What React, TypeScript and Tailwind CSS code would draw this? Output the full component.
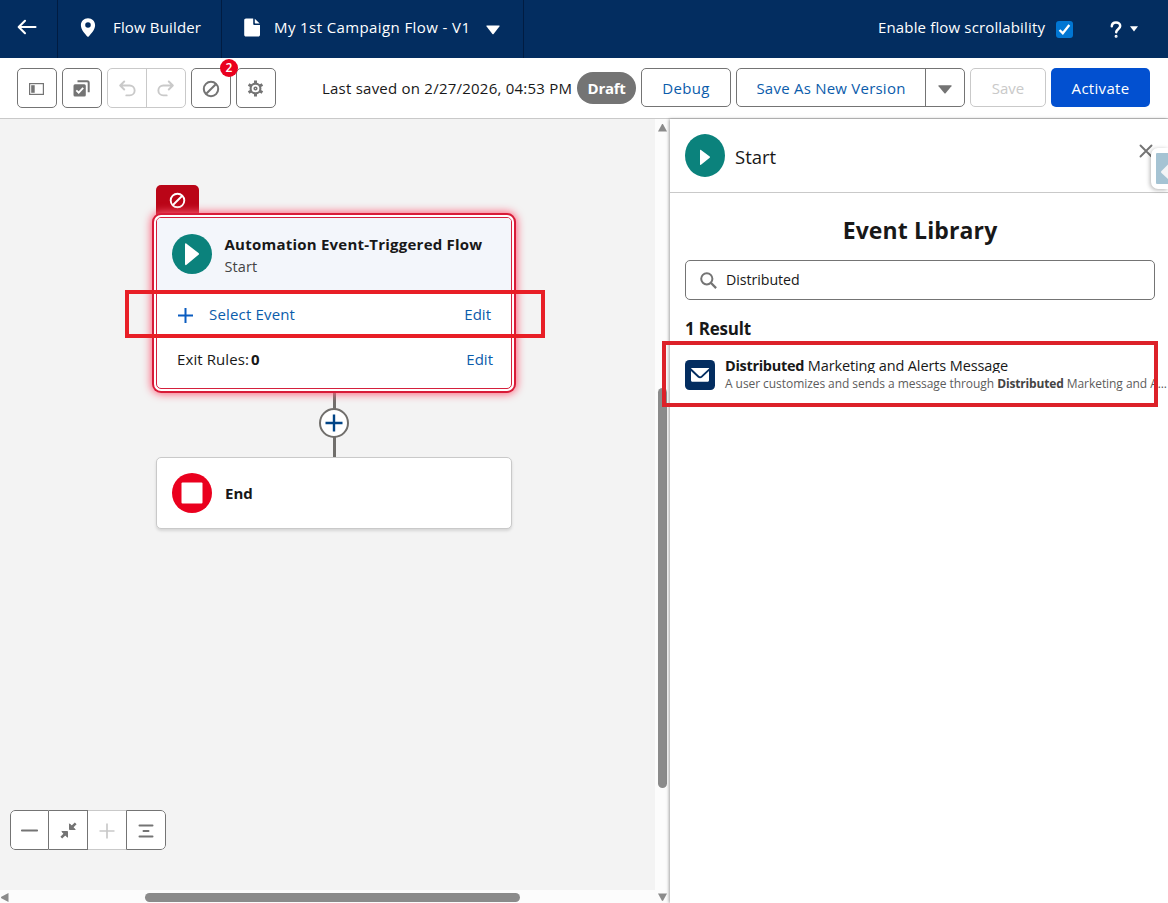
import React from "react";

const ink = "text-[#181818]";

function Ban({ className = "" }: { className?: string }) {
  return (
    <svg viewBox="0 0 18 18" className={className} fill="none" stroke="currentColor" strokeWidth="2">
      <circle cx="9" cy="9" r="7.2" />
      <path d="M4.2 13.8 13.8 4.2" />
    </svg>
  );
}

function TopBar() {
  return (
    <header className="flex h-[58px] shrink-0 items-stretch bg-[#032d60] text-[15px] text-white">
      <div className="flex w-[58px] items-center border-r border-[#011c42] pl-[17px] pb-[4px]">
        <svg className="h-[16px] w-[20px]" viewBox="0 0 20 16" fill="none" stroke="white" strokeWidth="2.1" strokeLinecap="round" strokeLinejoin="round">
          <path d="M18.500 8H2M8 1.800 1.700 8 8 14.200" />
        </svg>
      </div>
      <div className="flex w-[164px] items-center border-r border-[#011c42] pl-[22px] pb-[3px]">
        <svg className="h-[19px] w-[16px]" viewBox="0 0 16 19" fill="white">
          <path fillRule="evenodd" d="M8 .3C3.900.3.900 3.400.900 7.300c0 4.900 4.800 9.300 6.400 11.200.4.400 1 .4 1.400 0C10.300 16.600 15.100 12.200 15.100 7.300 15.100 3.400 12.100.3 8 .3Zm0 9.500a2.800 2.800 0 1 1 0-5.600 2.800 2.800 0 0 1 0 5.600Z" />
        </svg>
        <span className="ml-[17px] whitespace-nowrap tracking-[0.15px]">Flow Builder</span>
      </div>
      <div className="flex w-[302px] items-center border-r border-[#011c42] pl-[22px] pb-[3px]">
        <svg className="h-[19px] w-[16px]" viewBox="0 0 16 19" fill="white">
          <path d="M2 .5h7.200v5.300c0 .8.500 1.300 1.300 1.300H16v9.600c0 1.100-.7 1.800-1.800 1.800H2C.9 18.500.2 17.800.2 16.700V2.300C.2 1.200.9.5 2 .5ZM10.800.8 15.700 5.500h-4.200c-.5 0-.7-.2-.7-.7Z" />
        </svg>
        <span className="ml-[14px] w-[212px] whitespace-nowrap tracking-[0.4px]">My 1st Campaign Flow - V1</span>
        <svg className="mt-[5px] h-[10px] w-[14px]" viewBox="0 0 14 10" fill="white">
          <path d="M1 .5h12c.6 0 .7.500.4.900L7.600 9c-.4.400-.8.400-1.200 0L.6 1.400C.3 1 .4.500 1 .5Z" />
        </svg>
      </div>
      <div className="flex flex-1 items-center justify-end pb-[3px]">
        <span className="w-[178px] whitespace-nowrap font-medium tracking-[0.15px]">Enable flow scrollability</span>
        <span className="mt-[4px] flex h-[17px] w-[17px] items-center justify-center rounded-[3px] bg-[#0176d3]">
          <svg className="h-[13px] w-[13px]" viewBox="0 0 13 13" fill="none" stroke="white" strokeWidth="2.300">
            <path d="M1.500 7 4.800 10.200 11.300 2" />
          </svg>
        </span>
        <svg className="ml-[37px] mt-[3px] h-[17px] w-[12px]" viewBox="0 0 12 17" fill="none" stroke="white" strokeWidth="2.500" strokeLinecap="round">
          <path d="M1.800 5.300C1.900 2.900 3.600 1.500 6 1.500s4.200 1.400 4.200 3.600C10.200 8 6.400 7.900 6.200 11.200" />
          <circle cx="6.100" cy="15.300" r=".6" strokeWidth="1.800" />
        </svg>
        <svg className="ml-[8px] mr-[30px] mt-[2px] h-[6px] w-[8px]" viewBox="0 0 8 6" fill="white">
          <path d="M0 .3h8L4 5.500Z" />
        </svg>
      </div>
    </header>
  );
}

const box = "flex h-10 w-10 items-center justify-center rounded-[5px] border border-[#747474] bg-white text-[#747474]";

function Toolbar() {
  return (
    <div className="flex h-[61px] shrink-0 items-start gap-[5px] border-b border-[#c9c9c9] bg-white pl-[17px] pt-[10px] text-[15px]">
      <div className={box}>
        <svg className="mr-[2px] mt-[2px] h-[12px] w-[15px]" viewBox="0 0 15 12">
          <rect x=".6" y=".6" width="13.800" height="10.800" fill="none" stroke="#747474" strokeWidth="1.200" />
          <rect x="2.200" y="2.200" width="3.500" height="7.600" fill="#747474" />
        </svg>
      </div>
      <div className={box}>
        <svg className="mr-[2px] h-[17px] w-[17px]" viewBox="0 0 17 17" fill="none">
          <path d="M4.500 1.300h9.700c1 0 1.500.5 1.500 1.500v9.500" stroke="#747474" strokeWidth="2" />
          <rect x=".5" y="4.300" width="12.300" height="12.300" rx="1.500" fill="#747474" />
          <path d="M3.300 10.300 5.700 12.700 10.200 7.900" stroke="white" strokeWidth="1.800" />
        </svg>
      </div>
      <div className="flex h-10 w-[79px] rounded-[5px] border border-[#c9c9c9] text-[#c9c9c9]">
        <div className="flex w-[39px] items-center justify-center border-r border-[#c9c9c9] pt-[1px]">
          <svg className="h-[17px] w-[17px]" viewBox="0 0 17 17" fill="none" stroke="currentColor" strokeWidth="1.900" strokeLinecap="round" strokeLinejoin="round">
            <path d="M5.200 1.500 1.200 5.500l4 4M1.500 5.500h9.200a4.900 4.900 0 0 1 0 9.900H7.300" />
          </svg>
        </div>
        <div className="flex flex-1 items-center justify-center pr-[1px] pt-[1px]">
          <svg className="h-[17px] w-[17px] -scale-x-100" viewBox="0 0 17 17" fill="none" stroke="currentColor" strokeWidth="1.900" strokeLinecap="round" strokeLinejoin="round">
            <path d="M5.200 1.500 1.200 5.500l4 4M1.500 5.500h9.200a4.900 4.900 0 0 1 0 9.900H7.300" />
          </svg>
        </div>
      </div>
      <div className={box + " relative"}>
        <Ban className="h-[18px] w-[18px] mt-[2px]" />
        <span className="absolute -right-[8px] -top-[10px] flex h-[18px] w-[18px] items-center justify-center rounded-full bg-[#ea001e] text-[12px] font-semibold leading-none text-white">2</span>
      </div>
      <div className={box}>
        <svg className="mr-[1px] mt-[1px] h-[17px] w-[17px]" viewBox="0 0 17 17" fill="none" stroke="currentColor">
          <circle cx="8.500" cy="8.500" r="4.900" strokeWidth="2.100" />
          <circle cx="8.500" cy="8.500" r="1.300" strokeWidth="1.600" />
          <path d="M8.500 .5v3M8.500 13.500v3M1.600 4.500l2.600 1.500M12.800 11l2.600 1.500M1.600 12.500 4.200 11M12.800 6l2.600-1.500" strokeWidth="3" />
        </svg>
      </div>
      <span className={"ml-[41px] w-[250px] whitespace-nowrap leading-[40px] tracking-[0.23px] " + ink}>Last saved on 2/27/2026, 04:53 PM</span>
      <span className="mt-[4px] flex h-8 w-[59px] items-center justify-center rounded-full bg-[#747474] font-bold tracking-[-0.3px] text-white">Draft</span>
      <button className="h-[39px] w-[90px] rounded-[5px] border border-[#747474] pt-[1px] text-[#0b5cab] tracking-[0.3px]">Debug</button>
      <div className="flex h-[39px] w-[229px] rounded-[5px] border border-[#747474] text-[#0b5cab]">
        <button className="w-[189px] whitespace-nowrap border-r border-[#747474] pt-[1px] tracking-[0.23px]">Save As New Version</button>
        <span className="flex flex-1 items-center justify-center pt-[4px]">
          <svg className="h-[9px] w-[14px]" viewBox="0 0 14 9" fill="#747474">
            <path d="M1 .3h12c.6 0 .7.500.4.9L7.600 8.300c-.4.400-.8.400-1.200 0L.6 1.200C.3.800.4.300 1 .3Z" />
          </svg>
        </span>
      </div>
      <button className="h-[39px] w-[76px] rounded-[5px] border border-[#c9c9c9] pt-[1px] text-[#c9c9c9]">Save</button>
      <button className="h-[39px] w-[99px] rounded-[5px] bg-[#0250d0] pt-[1px] text-white tracking-[0.3px]">Activate</button>
    </div>
  );
}

function Canvas() {
  return (
    <div className="relative h-[771px] bg-[#f3f3f3] text-[15px]">
      <div className="absolute left-[156px] top-[66px] flex h-[32px] w-[43px] justify-center rounded-t-[5px] bg-[#ba0517] pt-[7px] text-white">
        <Ban className="h-[17px] w-[17px]" />
      </div>
      <div className="absolute left-[333px] top-[274px] h-[66px] w-[3px] bg-[#706e6b]" />
      <div className="absolute left-[156px] top-[98px] h-[172px] w-[356px] overflow-visible rounded-[5px] border border-[#d4203c] bg-white shadow-[0_0_0_2px_#fff,0_0_0_4px_#d81b38,0_0_8px_5px_#ff5f78]">
        <div className="flex h-[74px] rounded-t-[4px] bg-[#f3f6fb] pl-[15px] pt-[16px]">
          <svg className="h-10 w-10" viewBox="0 0 40 40">
            <circle cx="20" cy="20" r="20" fill="#0b827c" />
            <path d="M13 10.500c0-1.200.7-1.500 1.500-.8l12 9.300c.7.600.7 1.200 0 1.800l-12 10c-.8.700-1.500.4-1.500-.7Z" fill="white" />
          </svg>
          <div className="-mt-[1px] ml-[12.500px] whitespace-nowrap">
            <div className={"font-bold leading-[23px] tracking-[0.23px] " + ink}>Automation Event-Triggered Flow</div>
            <div className="text-[14.500px] leading-[21px] tracking-[0.1px] text-[#444]">Start</div>
          </div>
        </div>
        <div className="flex h-[44px] items-center pl-[20px] pr-[20px] text-[#0b5cab]">
          <svg className="mt-[2px] h-[17px] w-[17px]" viewBox="0 0 17 17" stroke="#0b5cc0" strokeWidth="2">
            <path d="M8.500 1v15M1 8.500h15" />
          </svg>
          <span className="ml-[15px] tracking-[0.17px]">Select Event</span>
          <span className="ml-auto">Edit</span>
        </div>
        <div className={"flex h-[46px] items-center pl-[20px] pr-[18px] " + ink}>
          <span className="tracking-[0.1px]">Exit Rules:</span>
          <b className="ml-[2px]">0</b>
          <span className="ml-auto text-[#0b5cab]">Edit</span>
        </div>
      </div>
      <div className="absolute left-[319px] top-[289px] flex h-[30px] w-[30px] items-center justify-center rounded-full border-[2px] border-[#706e6b] bg-white">
        <svg className="h-[18px] w-[18px]" viewBox="0 0 18 18" stroke="#014486" strokeWidth="2.400">
          <path d="M9 .5v17M.5 9h17" />
        </svg>
      </div>
      <div className="absolute left-[156px] top-[338px] flex h-[72px] w-[356px] items-center rounded-[5px] border border-[#c9c9c9] bg-white pl-[15px] shadow-[0_2px_3px_rgba(0,0,0,0.12)]">
        <svg className="h-10 w-10" viewBox="0 0 40 40">
          <circle cx="20" cy="20" r="20" fill="#ea001e" />
          <rect x="9.500" y="9.500" width="21" height="21" rx="1" fill="white" />
        </svg>
        <span className={"ml-[13px] font-bold " + ink}>End</span>
      </div>
      <div className="absolute left-[125px] top-[171px] h-[48px] w-[420px] border-4 border-[#e81e26]" />
      <div className="absolute left-[10px] top-[691px] flex h-[40px] w-[156px] overflow-hidden rounded-[5px] bg-white text-[#747474]">
        <div className="flex w-[39px] items-center justify-center rounded-l-[5px] border border-[#747474]">
          <svg className="mt-[1px] h-[3px] w-[17px]" viewBox="0 0 17 3"><rect y=".5" width="17" height="2" rx=".8" fill="currentColor" /></svg>
        </div>
        <div className="flex w-[39px] items-center justify-center border border-l-0 border-[#747474]">
          <svg className="mt-[1px] h-[17px] w-[17px]" viewBox="0 0 17 17" fill="currentColor" stroke="currentColor">
            <path d="M9.500 1.800v5.700h5.700ZM7.500 15.200V9.500H1.800Z" strokeWidth="1" strokeLinejoin="round" />
            <path d="M15.700 1.300 11 6M1.300 15.700 6 11" strokeWidth="2.500" />
          </svg>
        </div>
        <div className="flex w-[38px] items-center justify-center border-y border-[#c9c9c9] text-[#c9c9c9]">
          <svg className="mt-[2px] h-[16px] w-[16px]" viewBox="0 0 16 16" stroke="currentColor" strokeWidth="1.700"><path d="M8 .5v15M.5 8h15" /></svg>
        </div>
        <div className="flex w-[40px] items-center justify-center rounded-r-[5px] border border-[#747474]">
          <svg className="mt-[2px] h-[14px] w-[16px]" viewBox="0 0 16 14" stroke="currentColor" strokeWidth="2" strokeLinecap="round"><path d="M1.500 1.500h13M5.500 7h5M1.500 12.500h13" /></svg>
        </div>
      </div>
    </div>
  );
}

function SidePanel() {
  return (
    <aside className="relative flex w-[498px] shrink-0 flex-col bg-white shadow-[-1px_0_3px_rgba(0,0,0,0.35)]">
      <div className="flex h-[74px] shrink-0 border-b border-[#c9c9c9] pl-[15px] pt-[15px]">
        <svg className="h-[43px] w-[40px]" viewBox="0 0 40 43">
          <ellipse cx="20" cy="21.500" rx="20" ry="21.500" fill="#0b827c" />
          <path d="M15 16.500c0-.8.500-1 1-.5l8.700 6.600c.5.400.5.800 0 1.200L16 30.700c-.5.500-1 .3-1-.5Z" fill="white" />
        </svg>
        <span className={"ml-[10px] mt-[9px] text-[18.500px] leading-[28px] " + ink}>Start</span>
        <svg className="ml-auto mr-[15px] mt-[10px] h-[14px] w-[14px]" viewBox="0 0 14 14" stroke="#747474" strokeWidth="1.900" strokeLinecap="round">
          <path d="m1.500 1.500 11 11M12.500 1.500l-11 11" />
        </svg>
      </div>
      <div className="absolute right-0 top-[29px] h-[41px] w-[17px] rounded-l-[7px] bg-white pl-[5px] pt-[5px] shadow-[-1px_1px_4px_rgba(0,0,0,0.3)]">
        <svg className="h-[31px] w-[12px]" viewBox="0 0 12 31">
          <rect width="14" height="31" rx="1" fill="#a5c3d3" />
          <path d="M12 11.500 5.500 18c-.7.700-.7 1.300 0 2L12 26Z" fill="#f3f4f6" />
        </svg>
      </div>
      <h2 className={"mt-[20px] pl-[2px] text-center text-[23px] font-bold leading-[34px] tracking-[0.13px] " + ink}>Event Library</h2>
      <div className="ml-[15px] mt-[13px] flex h-10 w-[470px] shrink-0 items-center rounded-[5px] border border-[#747474] pl-[14px]">
        <svg className="h-[17px] w-[17px]" viewBox="0 0 17 17" fill="none" stroke="#747474" strokeWidth="2">
          <circle cx="6.800" cy="6.800" r="5.600" />
          <path d="m10.800 10.800 5.300 5.300" strokeWidth="2.300" />
        </svg>
        <span className={"ml-[9px] text-[14.200px] tracking-[-0.05px] " + ink}>Distributed</span>
      </div>
      <div className={"ml-[15px] mt-[16px] text-[17px] font-bold leading-[25px] tracking-[-0.2px] " + ink}>1 Result</div>
      <div className="ml-[15px] mt-[15px] flex">
        <svg className="mt-[4px] h-[30px] w-[30px] shrink-0" viewBox="0 0 30 30">
          <rect width="30" height="30" rx="4.500" fill="#032d60" />
          <path d="M6.500 8h17.300c.4 0 .5.300.2.600l-7.900 7.400c-.6.500-1.300.500-1.900 0L6.300 8.600C6 8.300 6.100 8 6.500 8Z" fill="white" />
          <path d="M6 11v9.200c0 .9.600 1.500 1.500 1.500h15c.9 0 1.500-.6 1.500-1.500V11l-6.900 6.400c-1.200 1.100-3 1.100-4.200 0Z" fill="white" />
        </svg>
        <div className="ml-[10px] whitespace-nowrap">
          <div className={"h-[17px] overflow-hidden text-[14.500px] leading-[20px] tracking-[-0.12px] " + ink}><b className="tracking-[-0.3px]">Distributed</b> Marketing and Alerts Message</div>
          <div className="mt-[1px] text-[12px] leading-[20px] tracking-[-0.06px] text-[#5c5c5c]">A user customizes and sends a message through <b className="tracking-[-0.15px] text-[#444]">Distributed</b> Marketing and A...</div>
        </div>
      </div>
      <div className="absolute -left-[8px] top-[222px] h-[66px] w-[496px] border-4 border-[#dc2129]" />
    </aside>
  );
}

export default function App() {
  return (
    <div className="flex h-[903px] w-[1168px] flex-col overflow-hidden bg-white font-['Open_Sans','Noto_Sans',sans-serif]">
      <TopBar />
      <Toolbar />
      <main className="flex min-h-0 flex-1">
        <div className="flex w-[655px] flex-col">
          <Canvas />
          <div className="flex h-[13px] items-center bg-[#fcfcfc] pl-[1px] pt-[2px]">
            <svg className="h-[9px] w-[8px]" viewBox="0 0 8 9" fill="#8b8b8b"><path d="M7.500 0v9L.3 5.200c-.4-.4-.4-1 0-1.400Z" /></svg>
            <div className="ml-[136px] h-[9px] w-[375px] rounded-full bg-[#8b8b8b]" />
          </div>
        </div>
        <div className="flex w-[15px] flex-col items-center bg-[#fcfcfc] pt-[5px]">
          <svg className="h-[8px] w-[9px]" viewBox="0 0 9 8" fill="#8b8b8b"><path d="M0 7.500h9L5.200.4c-.4-.5-1-.5-1.400 0Z" /></svg>
          <div className="mt-[256px] h-[400px] w-[9px] rounded-full bg-[#8b8b8b]" />
          <svg className="mt-[105px] h-[8px] w-[9px]" viewBox="0 0 9 8" fill="#8b8b8b"><path d="M0 .5h9L5.200 7.600c-.4.500-1 .5-1.400 0Z" /></svg>
        </div>
        <SidePanel />
      </main>
    </div>
  );
}
